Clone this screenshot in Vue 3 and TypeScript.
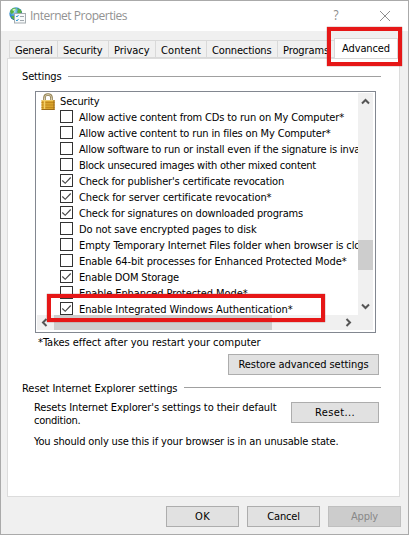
<script setup lang="ts">
interface Option { label: string; width: number; checked?: boolean }
interface Tab { label: string; width: number; textWidth: number }

const tabs: Tab[] = [
  { label: 'General', width: 48, textWidth: 37.5 },
  { label: 'Security', width: 51, textWidth: 39.5 },
  { label: 'Privacy', width: 47, textWidth: 35.5 },
  { label: 'Content', width: 51, textWidth: 40 },
  { label: 'Connections', width: 71, textWidth: 59.5 },
  { label: 'Programs', width: 57, textWidth: 46 },
]

const options: Option[] = [
  { label: 'Allow active content from CDs to run on My Computer*', width: 265 },
  { label: 'Allow active content to run in files on My Computer*', width: 251.5 },
  { label: 'Allow software to run or install even if the signature is invalid', width: 292.5 },
  { label: 'Block unsecured images with other mixed content', width: 237 },
  { label: "Check for publisher's certificate revocation", width: 205, checked: true },
  { label: 'Check for server certificate revocation*', width: 192.5, checked: true },
  { label: 'Check for signatures on downloaded programs', width: 224, checked: true },
  { label: 'Do not save encrypted pages to disk', width: 177.5 },
  { label: 'Empty Temporary Internet Files folder when browser is closed', width: 298.5 },
  { label: 'Enable 64-bit processes for Enhanced Protected Mode*', width: 267.5 },
  { label: 'Enable DOM Storage', width: 100, checked: true },
  { label: 'Enable Enhanced Protected Mode*', width: 168.5 },
  { label: 'Enable Integrated Windows Authentication*', width: 213.5, checked: true },
]

// Tracks a label so that it occupies the given width in pixels.
const vFit = {
  mounted(el: HTMLElement, binding: { value: number }) {
    const natural = el.getBoundingClientRect().width
    const count = (el.textContent ?? '').length
    if (count) el.style.letterSpacing = `${(binding.value - natural) / count}px`
  },
}
</script>

<template>
  <div class="window">
    <header class="titlebar">
      <svg class="app-icon" width="17" height="17" viewBox="0 0 17 17">
        <defs>
          <radialGradient id="globe" cx=".35" cy=".3" r=".8">
            <stop offset="0" stop-color="#bfe8fa" />
            <stop offset=".45" stop-color="#3b94d2" />
            <stop offset="1" stop-color="#174c94" />
          </radialGradient>
        </defs>
        <circle cx="6.8" cy="6.8" r="6.5" fill="url(#globe)" />
        <path d="M1 4Q3 .8 6 .7L7 2 5 4 4.500 6 2 7zM8 1Q12 2 13 5L10 7 8 5 9 3zM2 9L5 9 7 11 6 13Q3 12 2 9z" fill="#58b13f" />
        <path d="M3 3Q5 1 7 2L5 4z" fill="#d8f2c8" />
        <rect x="5.500" y="6.500" width="11" height="9.500" fill="#f7f9fa" stroke="#a5acb0" />
        <path d="M7 9l1 1 1.500-2M7 13l1 1 1.500-2" fill="none" stroke="#389bd0" />
        <path d="M11 9.500h4M11 13.500h4" stroke="#9fa7ad" />
      </svg>
      <span class="title"><span v-fit="97">Internet Properties</span></span>
      <span class="help">?</span>
      <svg class="close" width="12" height="12" viewBox="0 0 12 12"><path d="M1 1l10 10M11 1L1 11" stroke="#8f8f8f" fill="none" /></svg>
    </header>

    <nav class="tabs">
      <div v-for="t in tabs" :key="t.label" class="tab" :style="{ width: t.width + 'px' }">
        <span v-fit="t.textWidth">{{ t.label }}</span>
      </div>
      <div class="tab active"><span v-fit="48">Advanced</span></div>
      <div class="highlight highlight-tab"></div>
    </nav>

    <main class="panel">
      <div class="group settings-group"><span v-fit="39.5">Settings</span><i></i></div>

      <section class="list">
        <div class="viewport">
          <div class="row heading">
            <svg class="lock" width="14" height="17" viewBox="0 0 14 17">
              <path d="M3.500 8V4.500Q3.500 1.500 7 1.500T10.500 4.500V8" fill="none" stroke="#8e7c4e" stroke-width="2.600" />
              <path d="M3.500 8V4.500Q3.500 1.500 7 1.500T10.500 4.500V8" fill="none" stroke="#d9cfae" stroke-width="1" />
              <rect x=".5" y="7" width="13" height="9.500" fill="#d9a42c" />
              <path d="M.5 9.500h13M.5 12h13M.5 14.500h13" stroke="#c38a1c" />
              <path d="M3.500 7v9.500" stroke="#f3cf68" stroke-width="1.500" />
              <path d="M1 7.500h12" stroke="#f0cc69" />
              <path d="M.5 16.500h13M13 7v10" stroke="#9c6b18" />
            </svg>
            <span v-fit="39.5">Security</span>
          </div>
          <div v-for="o in options" :key="o.label" class="row">
            <svg class="box" width="13" height="13" viewBox="0 0 13 13">
              <rect x=".5" y=".5" width="12" height="12" fill="#fff" stroke="#333" />
              <path v-if="o.checked" d="M2.300 6.500L5.200 9.300 10.700 3.500" fill="none" stroke="#444" stroke-width="1.150" />
            </svg>
            <span v-fit="o.width">{{ o.label }}</span>
          </div>
        </div>
        <div class="vbar">
          <svg width="9" height="7" viewBox="0 0 9 7"><path d="M1 5.500L4.500 2 8 5.500" fill="none" stroke="#555" stroke-width="2" /></svg>
          <div class="vthumb"></div>
          <svg width="9" height="7" viewBox="0 0 9 7"><path d="M1 1.500L4.500 5 8 1.500" fill="none" stroke="#555" stroke-width="2" /></svg>
        </div>
        <div class="hbar">
          <svg width="7" height="9" viewBox="0 0 7 9"><path d="M5.500 1L2 4.500 5.500 8" fill="none" stroke="#555" stroke-width="2" /></svg>
          <div class="hthumb"></div>
          <svg class="right" width="7" height="9" viewBox="0 0 7 9"><path d="M1.500 1L5 4.500 1.500 8" fill="none" stroke="#555" stroke-width="2" /></svg>
        </div>
        <div class="highlight highlight-row"></div>
      </section>

      <p class="note"><span v-fit="222.5">*Takes effect after you restart your computer</span></p>
      <button class="btn restore"><span v-fit="130">Restore advanced settings</span></button>

      <div class="group reset-group"><span v-fit="155.5">Reset Internet Explorer settings</span><i></i></div>
      <div class="reset">
        <div class="reset-text">
          <span v-fit="242.5">Resets Internet Explorer's settings to their default</span><br>
          <span v-fit="46.5">condition.</span>
        </div>
        <button class="btn reset-btn"><span v-fit="40">Reset...</span></button>
      </div>
      <p class="warning"><span v-fit="304.5">You should only use this if your browser is in an unusable state.</span></p>
    </main>

    <footer class="actions">
      <button class="btn"><span v-fit="15">OK</span></button>
      <button class="btn"><span v-fit="32.5">Cancel</span></button>
      <button class="btn" disabled><span v-fit="27">Apply</span></button>
    </footer>
  </div>
</template>

<style>
body { overflow: hidden; }
</style>

<style scoped>
* { box-sizing: border-box; }
.window {
  width: 409px; height: 535px; background: #f0f0f0; border: 1px solid #aaa;
  font: 11px/13px "DejaVu Sans Condensed", "DejaVu Sans", sans-serif;
  font-stretch: condensed; color: #000; white-space: nowrap;
}
.titlebar { height: 30px; background: #fff; display: flex; align-items: center; padding-left: 8px; }
.app-icon { margin-top: -2px; }
.title { margin-left: 4px; width: 303px; font: 12px/16px "Open Sans", sans-serif; color: #929292; }
.help { width: 8px; margin-top: -3px; font: 14px/16px "Open Sans", sans-serif; color: #8c8c8c; transform: scaleX(.85); }
.close { margin: -1px 0 0 38px; }

.tabs { position: relative; height: 27px; display: flex; align-items: flex-end; padding-left: 8px; }
.tab { height: 18px; padding: 3px 0 0 5px; border: 1px solid #d9d9d9; border-right: 0; line-height: 13px; overflow: hidden; }
.tab.active { position: relative; width: 64px; height: 21px; margin-bottom: -1px; padding: 3px 0 0 7px; background: #fff; border-right: 1px solid #d9d9d9; }
.highlight { position: absolute; border: 4px solid #e61717; box-shadow: 0 0 1px #8c3535; z-index: 2; }
.highlight-tab { left: 326px; top: -4px; width: 75px; height: 39px; }

.panel { width: 393px; height: 439px; margin-left: 6px; background: #fff; border: 1px solid #dcdcdc; padding: 11px 0 0 14px; }
.group { display: flex; align-items: center; height: 13px; }
.group i { flex: 1; height: 1px; background: #a0a0a0; }
.group span { margin-right: 6px; }
.settings-group { width: 359px; }
.settings-group i { margin-top: -1px; }

.list {
  position: relative; width: 341px; height: 242px; margin: 8px 0 0 13px; padding: 1px;
  border: 1px solid #828790; display: grid; grid-template: 222px 15px / 321px 15px;
}
.viewport { overflow: hidden; }
.row { height: 16px; display: flex; align-items: center; padding-left: 23px; }
.row span { margin-left: 6px; }
.row.heading { padding-left: 4px; }
.heading span { margin-left: 5px; }
.lock { flex: none; }
.box { flex: none; margin-top: -1px; }
.vbar { background: #f0f0f0; display: flex; flex-direction: column; align-items: center; padding-top: 5px; }
.vthumb { width: 15px; height: 30px; margin: 135px 0 33px; background: #cdcdcd; }
.hbar { grid-column: 1 / 3; background: #f0f0f0; display: flex; align-items: center; padding-left: 4px; }
.hthumb { width: 218px; height: 15px; margin-left: 6px; background: #cdcdcd; }
.right { margin-left: 73px; }
.highlight-row { left: 11px; top: 202px; width: 278px; height: 28px; }

.note { margin: 3px 0 0 16px; height: 13px; }
.btn {
  display: flex; align-items: center; justify-content: center; height: 21px; padding: 0;
  border: 1px solid #adadad; background: #e1e1e1; color: #000; font: inherit; border-radius: 0;
}
.btn:disabled { background: #ccc; border-color: #bfbfbf; color: #888; }
.restore { width: 151px; margin: 5px 0 0 206px; }
.reset-group { width: 359px; margin-top: 7px; }
.reset-group i { margin-top: -3px; }
.reset { display: flex; justify-content: space-between; width: 357px; margin-top: 6px; padding-left: 12px; }
.reset-btn { width: 88px; margin-top: 1px; }
.warning { margin: 8px 0 0 12px; }
.actions { display: flex; gap: 8px; margin: 9px 0 0 165px; }
.actions .btn { width: 73px; }
</style>
